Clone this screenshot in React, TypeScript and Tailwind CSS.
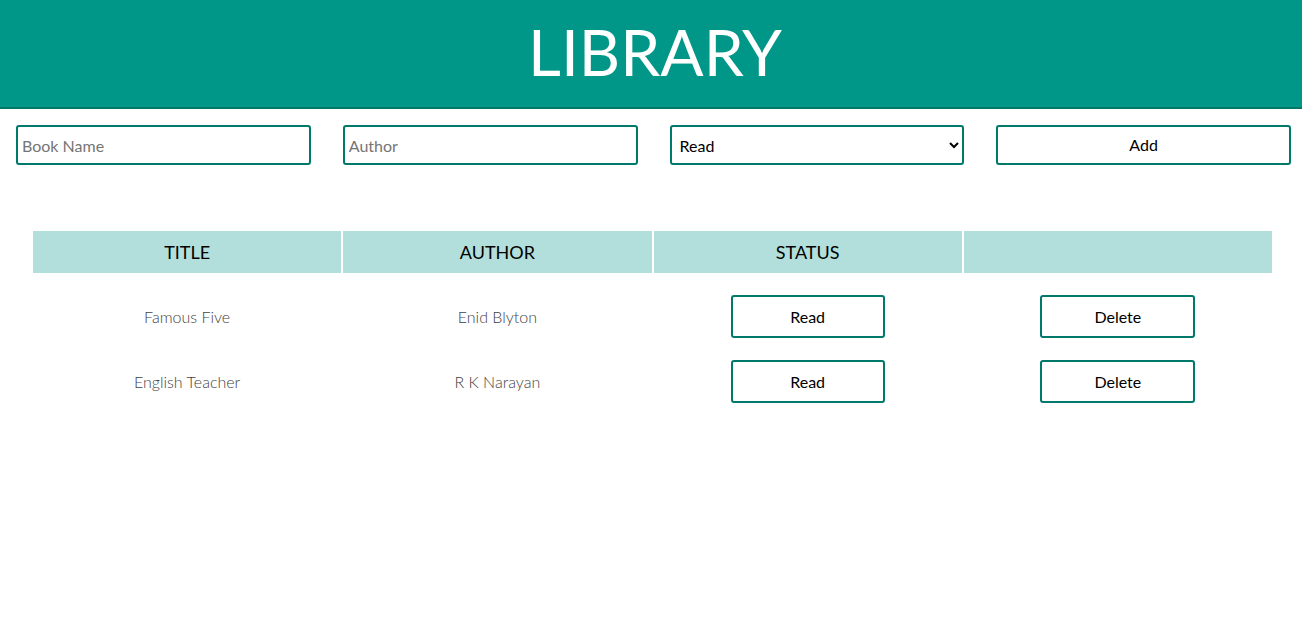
const books = [
  { title: "Famous Five", author: "Enid Blyton", status: "Read" },
  { title: "English Teacher", author: "R K Narayan", status: "Read" },
];

export default function App() {
  return (
    <div className="min-h-screen bg-white font-['Lato','Open_Sans',sans-serif] text-black">
      {/* Header */}
      <header className="h-[109px] bg-[#009688] border-b-2 border-[#00796b] flex items-center justify-center">
        <h1 className="text-[64px] font-normal text-white leading-none -mt-[4px] ml-2">LIBRARY</h1>
      </header>

      {/* Form */}
      <div className="grid grid-cols-4 gap-8 pl-4 pr-[11px] mt-4">
        <input
          type="text"
          placeholder="Book Name"
          className="h-[40px] w-full border-2 border-[#00796b] rounded-[3px] px-1 text-base text-black placeholder:text-[#757575] outline-none"
        />
        <input
          type="text"
          placeholder="Author"
          className="h-[40px] w-full border-2 border-[#00796b] rounded-[3px] px-1 text-base text-black placeholder:text-[#757575] outline-none"
        />
        <select
          defaultValue="Read"
          className="h-[40px] w-full border-2 border-[#00796b] rounded-[3px] px-1 text-base bg-white text-black outline-none"
        >
          <option>Read</option>
          <option>Not Read</option>
        </select>
        <button className="h-[40px] w-full border-2 border-[#00796b] rounded-[3px] bg-white text-base text-black">
          Add
        </button>
      </div>

      {/* Table */}
      <table className="ml-[31px] mt-[64px] w-[1243px] border-separate border-spacing-[2px] table-fixed">
        <thead>
          <tr className="bg-[#b2dfdb]">
            <th className="h-[42px] font-normal text-lg">TITLE</th>
            <th className="h-[42px] font-normal text-lg">AUTHOR</th>
            <th className="h-[42px] font-normal text-lg">STATUS</th>
            <th className="h-[42px]"></th>
          </tr>
        </thead>
        <tbody>
          {books.map((b) => (
            <tr key={b.title}>
              <td className="pt-5 text-center font-light text-[#424242] text-base">{b.title}</td>
              <td className="pt-5 text-center font-light text-[#424242] text-base">{b.author}</td>
              <td className="pt-5 text-center">
                <button className="w-[154px] h-[43px] border-2 border-[#00796b] rounded-[3px] bg-white text-base">
                  {b.status}
                </button>
              </td>
              <td className="pt-5 text-center">
                <button className="w-[155px] h-[43px] border-2 border-[#00796b] rounded-[3px] bg-white text-base">
                  Delete
                </button>
              </td>
            </tr>
          ))}
        </tbody>
      </table>
    </div>
  );
}
